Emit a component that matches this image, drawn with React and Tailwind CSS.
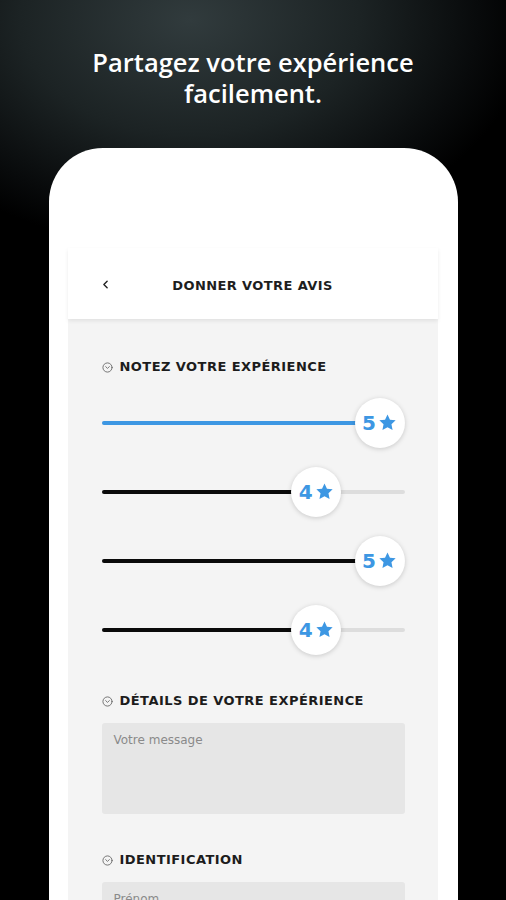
import { ChevronLeft, CircleChevronDown } from 'lucide-react';

const ratings = [
  { value: 5, active: true },
  { value: 4, active: false },
  { value: 5, active: false },
  { value: 4, active: false }
];

const StarIcon = () => (
  <svg viewBox="0 0 24 24" className="h-[19px] w-[19px]" fill="#3d97e3">
    <path d="M12 1.8l3.1 6.6 7.2.9-5.3 5 1.4 7.1L12 17.9l-6.4 3.5 1.4-7.1-5.3-5 7.2-.9z" />
  </svg>
);

const SectionTitle = ({ children }) => (
  <div className="flex items-center gap-[7px] h-[18px]">
    <CircleChevronDown className="h-[11px] w-[11px] text-[#6a6a6a]" strokeWidth={2} />
    <span className="text-[13px] font-bold tracking-[0.45px] text-[#1c1c1c] leading-[18px]">{children}</span>
  </div>
);

const RatingSlider = ({ value, active }) => {
  // thumb centre runs from 25px (1) to 278px (5) on a 303px track
  const center = 25 + ((value - 1) / 4) * 253;
  return (
    <div className="relative h-[69px] flex items-center">
      <div className="w-full h-[4px] rounded-full bg-[#dddddd]" />
      <div
        className={`absolute left-0 h-[4px] rounded-full ${active ? 'bg-[#3d97e3]' : 'bg-[#0a0a0a]'}`}
        style={{ width: center }}
      />
      <div
        className="absolute top-1/2 -translate-y-1/2 -translate-x-1/2 h-[50px] w-[50px] rounded-full bg-white shadow-[0_1px_5px_rgba(0,0,0,0.18)] flex items-center justify-center gap-[2px]"
        style={{ left: center }}
      >
        <span className="text-[20px] font-bold text-[#3d97e3] leading-none">{value}</span>
        <StarIcon />
      </div>
    </div>
  );
};

export default function App() {
  return (
    <div
      className="w-[506px] h-[900px] overflow-hidden flex flex-col bg-black bg-[radial-gradient(ellipse_340px_230px_at_190px_20px,#313b3d_0%,#1c2324_50%,#080a0b_85%,#000_100%)]"
      style={{ fontFamily: '"DejaVu Sans", "Open Sans", sans-serif' }}
    >
      <div className="pt-[47px] text-center text-white text-[25.5px] leading-[31px] font-semibold" style={{ fontFamily: '"Open Sans", sans-serif' }}>
        <p>Partagez votre expérience</p>
        <p>facilement.</p>
      </div>

      <div className="mt-[39px] mx-auto w-[409px] h-[752px] shrink-0 rounded-t-[54px] bg-white pt-[100px] pl-[19px] pr-[20px] flex flex-col">
        <div className="flex-grow bg-[#f4f4f4] flex flex-col">
          <header className="relative h-[71px] bg-white shadow-[0_2px_4px_rgba(0,0,0,0.08)] flex items-center justify-center pt-[5px]">
            <ChevronLeft className="absolute left-[31px] top-[30px] h-[13px] w-[13px] text-[#222]" strokeWidth={2.6} />
            <h1 className="text-[13px] font-bold text-[#1e1e1e] tracking-[0.4px]">DONNER VOTRE AVIS</h1>
          </header>

          <main className="px-[34px] pr-[33px] pt-[39px] flex flex-col">
            <SectionTitle>NOTEZ VOTRE EXPÉRIENCE</SectionTitle>
            <div className="mt-[12px]">
              {ratings.map((r, i) => (
                <RatingSlider key={i} value={r.value} active={r.active} />
              ))}
            </div>

            <div className="mt-[28px]">
              <SectionTitle>DÉTAILS DE VOTRE EXPÉRIENCE</SectionTitle>
            </div>
            <div className="mt-[13px] h-[91px] rounded-[3px] bg-[#e6e6e6] px-[12px] pt-[9px] text-[12px] leading-[16px] text-[#8a8a8a]">
              Votre message
            </div>

            <div className="mt-[37px]">
              <SectionTitle>IDENTIFICATION</SectionTitle>
            </div>
            <div className="mt-[13px] h-[40px] rounded-[3px] bg-[#e6e6e6] px-[12px] pt-[9px] text-[12px] leading-[16px] text-[#8a8a8a]">
              Prénom
            </div>
          </main>
        </div>
      </div>
    </div>
  );
}
